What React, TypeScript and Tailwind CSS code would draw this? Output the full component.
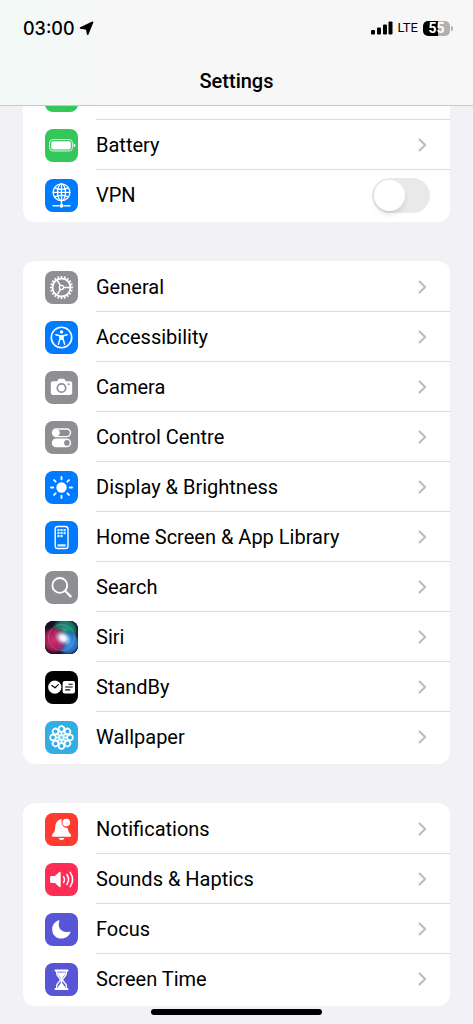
import { useState } from "react";
import type { ReactNode } from "react";

interface MenuItem {
  label: string;
  color: string;
  icon: ReactNode;
  isSwitch?: boolean;
  isTucked?: boolean;
}

const spokes = (count: number) => Array.from({ length: count }, (_, i) => (360 / count) * i);

const HotspotIcon = () => (
  <g fill="none" stroke="#fff" strokeWidth="2.4">
    <rect x="6" y="11" width="12" height="8" rx="4" />
    <rect x="15" y="11" width="12" height="8" rx="4" />
  </g>
);

const BatteryIcon = () => (
  <g>
    <rect x="4.6" y="10.6" width="22.8" height="11.4" rx="3.2" fill="none" stroke="#fff" strokeWidth="1" opacity="0.85" />
    <rect x="6.2" y="12.2" width="19.6" height="8.2" rx="1.8" fill="#fff" />
    <path d="M28.6 14.4c1.2.3 1.9 1 1.9 1.9s-.7 1.6-1.9 1.9z" fill="#fff" />
  </g>
);

const VpnIcon = () => (
  <g fill="none" stroke="#fff" strokeWidth="1.3" strokeLinecap="round">
    <circle cx="16.5" cy="13.3" r="8.4" />
    <ellipse cx="16.5" cy="13.3" rx="4" ry="8.4" />
    <path d="M16.5 5v17M8.2 13.3h16.6M9.7 8.8c4.2 1.9 9.4 1.9 13.6 0M9.7 17.8c4.2-1.9 9.4-1.9 13.6 0" />
    <path d="M16.5 22v4M8 26.8h6M19 26.8h6" strokeWidth="1.4" />
    <circle cx="16.5" cy="26.8" r="1.9" fill="#fff" stroke="none" />
  </g>
);

const GeneralIcon = () => (
  <g fill="none" stroke="#fff">
    {spokes(20).map((a) => (
      <path key={a} d="M16.5 7.2V5" strokeWidth="1.7" transform={`rotate(${a} 16.5 16.5)`} />
    ))}
    <circle cx="16.5" cy="16.5" r="8.9" strokeWidth="1.7" />
    <circle cx="16.5" cy="16.5" r="2.1" strokeWidth="1.4" />
    <path d="M18.6 16.5h6.6M15.4 14.7l-3.4-5.9M15.4 18.3l-3.4 5.9" strokeWidth="1.5" />
  </g>
);

const AccessibilityIcon = () => (
  <g>
    <circle cx="16.5" cy="16.5" r="10.2" fill="none" stroke="#fff" strokeWidth="1.6" />
    <circle cx="16.5" cy="10.9" r="1.7" fill="#fff" />
    <path
      d="M10.8 13.7l4.2 1v3.1l-1.6 5.4M22.2 13.7l-4.2 1v3.1l1.6 5.4M15 14.7h3"
      fill="none"
      stroke="#fff"
      strokeWidth="1.4"
      strokeLinecap="round"
      strokeLinejoin="round"
    />
    <path d="M14.7 14.2h3.6v4.8h-3.6z" fill="#fff" />
  </g>
);

const CameraIcon = () => (
  <g>
    <path
      d="M8 10.2h4.1l1.1-1.6c.3-.5.8-.8 1.4-.8h3.8c.6 0 1.1.3 1.4.8l1.1 1.6H25c1.3 0 2.2.9 2.2 2.2v9.4c0 1.3-.9 2.2-2.2 2.2H8c-1.3 0-2.2-.9-2.2-2.2v-9.4c0-1.3.9-2.2 2.2-2.2z"
      fill="#fff"
    />
    <circle cx="16.5" cy="17" r="4.2" fill="none" stroke="#8e8e93" strokeWidth="1.7" />
    <circle cx="23.7" cy="13.2" r="1" fill="#8e8e93" />
  </g>
);

const ControlIcon = () => (
  <g>
    <rect x="7.5" y="8" width="18" height="7.6" rx="3.8" fill="none" stroke="#fff" strokeWidth="1.4" />
    <circle cx="11.4" cy="11.8" r="3.4" fill="#fff" />
    <rect x="6.8" y="17.6" width="19.4" height="8.6" rx="4.3" fill="#fff" />
    <circle cx="21.9" cy="21.9" r="2.8" fill="#8e8e93" />
  </g>
);

const BrightnessIcon = () => (
  <g>
    <circle cx="16.5" cy="16.5" r="5.2" fill="#fff" />
    {spokes(8).map((a) => (
      <path key={a} d="M16.5 8.2V6" stroke="#fff" strokeWidth="1.9" strokeLinecap="round" transform={`rotate(${a} 16.5 16.5)`} />
    ))}
  </g>
);

const HomeScreenIcon = () => (
  <g>
    <rect x="10.2" y="5.5" width="12.8" height="22" rx="2.6" fill="none" stroke="#fff" strokeWidth="1.4" />
    {[8, 11, 14].map((y) =>
      [12.3, 15.4, 18.5].map((x) =>
        y === 14 && x > 16 ? null : <rect key={`${x}-${y}`} x={x} y={y} width="2.3" height="2.3" rx="0.5" fill="#fff" opacity="0.85" />
      )
    )}
    <rect x="12.3" y="23.2" width="8.6" height="2.2" rx="1" fill="#fff" opacity="0.85" />
  </g>
);

const SearchIcon = () => (
  <g fill="none" stroke="#fff" strokeLinecap="round">
    <circle cx="14.8" cy="14.4" r="7.4" strokeWidth="1.8" />
    <path d="M20.2 20l5.4 5.4" strokeWidth="2.2" />
  </g>
);

const SiriIcon = () => (
  <g>
    <defs>
      <clipPath id="siriClip">
        <rect width="33" height="33" rx="8" />
      </clipPath>
      <radialGradient id="siriGlow">
        <stop offset="0" stopColor="#fff" />
        <stop offset="0.35" stopColor="#f0fbff" stopOpacity="0.9" />
        <stop offset="1" stopColor="#8fd4ff" stopOpacity="0" />
      </radialGradient>
      <radialGradient id="siriRed">
        <stop offset="0" stopColor="#f0307a" />
        <stop offset="0.7" stopColor="#c01c58" stopOpacity="0.9" />
        <stop offset="1" stopColor="#7c0c3a" stopOpacity="0" />
      </radialGradient>
      <radialGradient id="siriGreen">
        <stop offset="0" stopColor="#2aa88a" />
        <stop offset="0.7" stopColor="#177d6b" stopOpacity="0.9" />
        <stop offset="1" stopColor="#0a4c46" stopOpacity="0" />
      </radialGradient>
      <radialGradient id="siriBlue">
        <stop offset="0" stopColor="#36a2f5" />
        <stop offset="0.7" stopColor="#2d74cc" stopOpacity="0.9" />
        <stop offset="1" stopColor="#1b3a80" stopOpacity="0" />
      </radialGradient>
    </defs>
    <g clipPath="url(#siriClip)">
      <rect width="33" height="33" fill="#1a1026" />
      <circle cx="20" cy="10" r="14" fill="url(#siriGreen)" />
      <circle cx="23" cy="22" r="13" fill="url(#siriBlue)" />
      <circle cx="9" cy="19" r="14" fill="url(#siriRed)" opacity="0.9" />
      <circle cx="16.5" cy="16.5" r="13" fill="none" stroke="#9adcd4" strokeWidth="1" opacity="0.3" />
      <ellipse cx="18" cy="17" rx="9" ry="7" fill="url(#siriGlow)" transform="rotate(30 18 17)" />
    </g>
  </g>
);

const StandByIcon = () => (
  <g>
    <circle cx="9.8" cy="16.2" r="6.6" fill="#fff" />
    <path d="M6.8 14.6l3.2 2.2 3.4-3.2" fill="none" stroke="#000" strokeWidth="1.2" strokeLinecap="round" strokeLinejoin="round" />
    <rect x="17.6" y="10" width="12.4" height="12.6" rx="2" fill="#fff" />
    <path d="M23.5 13.2h4.2M20.2 16h7.5M20.2 18.9h5" stroke="#000" strokeWidth="1.1" />
  </g>
);

const WallpaperIcon = () => (
  <g fill="none" stroke="#fff">
    <circle cx="16.5" cy="16.5" r="5.5" fill="#fff" stroke="none" opacity="0.4" />
    {spokes(8).map((a) => (
      <g key={a} transform={`rotate(${a} 16.5 16.5)`}>
        <circle cx="16.5" cy="8" r="2.8" strokeWidth="1.7" />
        <path d="M16.5 11v3" strokeWidth="1.3" />
      </g>
    ))}
    <circle cx="16.5" cy="16.5" r="2.3" strokeWidth="1.2" />
  </g>
);

const NotificationsIcon = () => (
  <g fill="#fff">
    <path d="M16.5 6.2c-4 .5-6.1 3.6-6.2 7.4-.1 4-.8 5.5-2.6 7.3-.6.6-.8 1-.8 1.5 0 .8.6 1.3 1.5 1.3h16.2c.9 0 1.5-.5 1.5-1.3 0-.5-.2-.9-.8-1.5-1.5-1.5-2.3-3-2.5-5.7-3.6-.4-6.3-3-6.3-6.3 0-1 .1-1.8.5-2.7z" />
    <circle cx="21.3" cy="9.6" r="3.8" />
    <path d="M13.7 25h5.6c-.3 1.4-1.4 2.2-2.8 2.2s-2.5-.8-2.8-2.2z" />
  </g>
);

const SoundsIcon = () => (
  <g>
    <path d="M6.3 13h3.6l4.5-4.1c.6-.5 1.3-.2 1.3.6v14c0 .8-.7 1.1-1.3.6L9.9 20H6.3c-.7 0-1.2-.5-1.2-1.2v-4.6c0-.7.5-1.2 1.2-1.2z" fill="#fff" />
    <path d="M18.6 13.6c1.1 1.8 1.1 4 0 5.8M21.9 11.5c2 3 2 7 0 10M25.2 9.4c2.9 4.3 2.9 9.9 0 14.2" fill="none" stroke="#fff" strokeWidth="1.5" strokeLinecap="round" />
  </g>
);

const FocusIcon = () => (
  <path d="M13.6 7.3c.5-.2 1 .2.8.8-2.3 6.7 2.1 12.6 10.2 10.6.6-.1 1 .3.8.9-1.5 3.8-4.9 6-8.9 6-5.3 0-9.3-4-9.3-9.2 0-4.2 2.5-7.6 6.4-9.1z" fill="#fff" />
);

const ScreenTimeIcon = () => (
  <g>
    <path d="M10.6 7.6h11.8M10.6 26h11.8" stroke="#fff" strokeWidth="2.2" strokeLinecap="round" />
    <path d="M11.7 8v2.6c0 3 3.7 3.9 3.7 6.1s-3.7 3.1-3.7 6.1v2.7M21.3 8v2.6c0 3-3.7 3.9-3.7 6.1s3.7 3.1 3.7 6.1v2.7" fill="none" stroke="#fff" strokeWidth="1.4" />
    <path d="M12.2 9.6h8.6c-.2 3-3.3 4-3.6 6V20l2.9 3.9v1.6h-7.2v-1.6l2.9-3.9v-4.4c-.3-2-3.4-3-3.6-6z" fill="#fff" />
  </g>
);

const connectivity: MenuItem[] = [
  { label: "Personal Hotspot", color: "bg-[#34c759]", icon: <HotspotIcon />, isTucked: true },
  { label: "Battery", color: "bg-[#34c759]", icon: <BatteryIcon /> },
  { label: "VPN", color: "bg-[#007aff]", icon: <VpnIcon />, isSwitch: true },
];

const device: MenuItem[] = [
  { label: "General", color: "bg-[#8e8e93]", icon: <GeneralIcon /> },
  { label: "Accessibility", color: "bg-[#007aff]", icon: <AccessibilityIcon /> },
  { label: "Camera", color: "bg-[#8e8e93]", icon: <CameraIcon /> },
  { label: "Control Centre", color: "bg-[#8e8e93]", icon: <ControlIcon /> },
  { label: "Display & Brightness", color: "bg-[#007aff]", icon: <BrightnessIcon /> },
  { label: "Home Screen & App Library", color: "bg-[#007aff]", icon: <HomeScreenIcon /> },
  { label: "Search", color: "bg-[#8e8e93]", icon: <SearchIcon /> },
  { label: "Siri", color: "bg-black", icon: <SiriIcon /> },
  { label: "StandBy", color: "bg-black", icon: <StandByIcon /> },
  { label: "Wallpaper", color: "bg-[#32ade6]", icon: <WallpaperIcon /> },
];

const alerts: MenuItem[] = [
  { label: "Notifications", color: "bg-[#ff3b30]", icon: <NotificationsIcon /> },
  { label: "Sounds & Haptics", color: "bg-[#ff2d55]", icon: <SoundsIcon /> },
  { label: "Focus", color: "bg-[#5856d6]", icon: <FocusIcon /> },
  { label: "Screen Time", color: "bg-[#5856d6]", icon: <ScreenTimeIcon /> },
];

const Chevron = () => (
  <svg className="w-[9px] h-[14px] mr-[23px] shrink-0" aria-hidden="true" fill="none" viewBox="0 0 9 14">
    <path stroke="#bcbcc0" strokeWidth="2" strokeLinecap="round" strokeLinejoin="round" d="M1.5 1.5L7.2 7l-5.7 5.5" />
  </svg>
);

const Row = ({ item, isLast }: { item: MenuItem; isLast: boolean }) => {
  const [isOn, setIsOn] = useState(false);
  const body = (
    <>
      <span className={`w-[33px] h-[33px] shrink-0 rounded-lg ${item.color}`}>
        <svg className="w-full h-full" aria-hidden="true" viewBox="0 0 33 33">
          {item.icon}
        </svg>
      </span>
      <span className={`flex flex-1 h-[50px] items-center justify-between ${isLast ? "" : "border-b border-[#dcdcde]"}`}>
        <span>{!item.isTucked && item.label}</span>
        {item.isSwitch ? (
          <input
            type="checkbox"
            role="switch"
            checked={isOn}
            onChange={() => setIsOn(!isOn)}
            className="appearance-none w-[58px] h-[35px] mr-5 p-[2px] shrink-0 rounded-full bg-[#e9e9ea] checked:bg-[#34c759] before:block before:w-[31px] before:h-[31px] before:rounded-full before:bg-white before:shadow-md checked:before:ml-[23px]"
          />
        ) : (
          <Chevron />
        )}
      </span>
    </>
  );

  return (
    <li>
      {item.isSwitch ? (
        <label className="flex w-full items-center gap-[18px] pl-[22px]">{body}</label>
      ) : (
        <button type="button" aria-label={item.label} className="flex w-full items-center gap-[18px] pl-[22px] text-left">
          {body}
        </button>
      )}
    </li>
  );
};

const Group = ({ items }: { items: MenuItem[] }) => (
  <ul className="rounded-xl bg-white pt-px pb-[2px]">
    {items.map((item, idx) => (
      <Row key={item.label} item={item} isLast={idx === items.length - 1} />
    ))}
  </ul>
);

const Header = () => (
  <header className="sticky top-0 z-10 border-b border-[#c9c9cb] bg-[#f7f7f7] bg-linear-to-r from-[#f1faf6] via-[#f7f7f7] via-25% to-[#f7f7f7]">
    <div className="flex h-14 items-center justify-between pl-[23px] pr-5">
      <div className="flex items-center gap-1 font-['Inter',sans-serif] text-[18px] font-medium">
        <span>03:00</span>
        <svg className="w-[15px] h-[15px]" aria-hidden="true" viewBox="0 0 15 15">
          <path d="M13.6 1.3L8.7 13.2 7.7 8 1.5 7z" stroke="#000" strokeWidth="1.6" strokeLinejoin="round" />
        </svg>
      </div>
      <div className="flex items-center gap-[5px]">
        <svg className="w-[22px] h-[14px]" aria-hidden="true" viewBox="0 0 22 14">
          <rect x="0" y="9" width="4" height="4.5" rx="1" />
          <rect x="6" y="6.5" width="4" height="7" rx="1" />
          <rect x="12" y="3.5" width="4" height="10" rx="1" />
          <rect x="17.5" y="0.5" width="4" height="13" rx="1" />
        </svg>
        <span className="text-[13px]">LTE</span>
        <div className="flex items-center gap-px">
          <div className="flex h-[15px] w-[27px] items-center justify-center rounded-[5px] bg-linear-to-r from-black from-55% to-[#b0b0b0] to-55% text-[14px] font-bold text-white">55</div>
          <div className="h-[5px] w-[2px] rounded-r-full bg-[#b0b0b0]" />
        </div>
      </div>
    </div>
    <h1 className="flex h-[49px] items-center justify-center text-[20px] font-medium">Settings</h1>
  </header>
);

const App = () => {
  return (
    <div className="min-h-screen bg-[#f2f1f6] font-['Roboto','Liberation_Sans',sans-serif] text-[20px] text-black">
      <Header />
      {/* first group starts partly scrolled under the header */}
      <main className="overflow-hidden px-[23px] pb-[18px]">
        <div className="-mt-[37px] flex flex-col gap-[39px]">
          <Group items={connectivity} />
          <Group items={device} />
          <Group items={alerts} />
        </div>
      </main>
      <div className="fixed inset-x-0 bottom-[9px] z-20 flex justify-center">
        <div className="h-[6px] w-[36%] rounded-full bg-black" />
      </div>
    </div>
  );
};

export default App;
